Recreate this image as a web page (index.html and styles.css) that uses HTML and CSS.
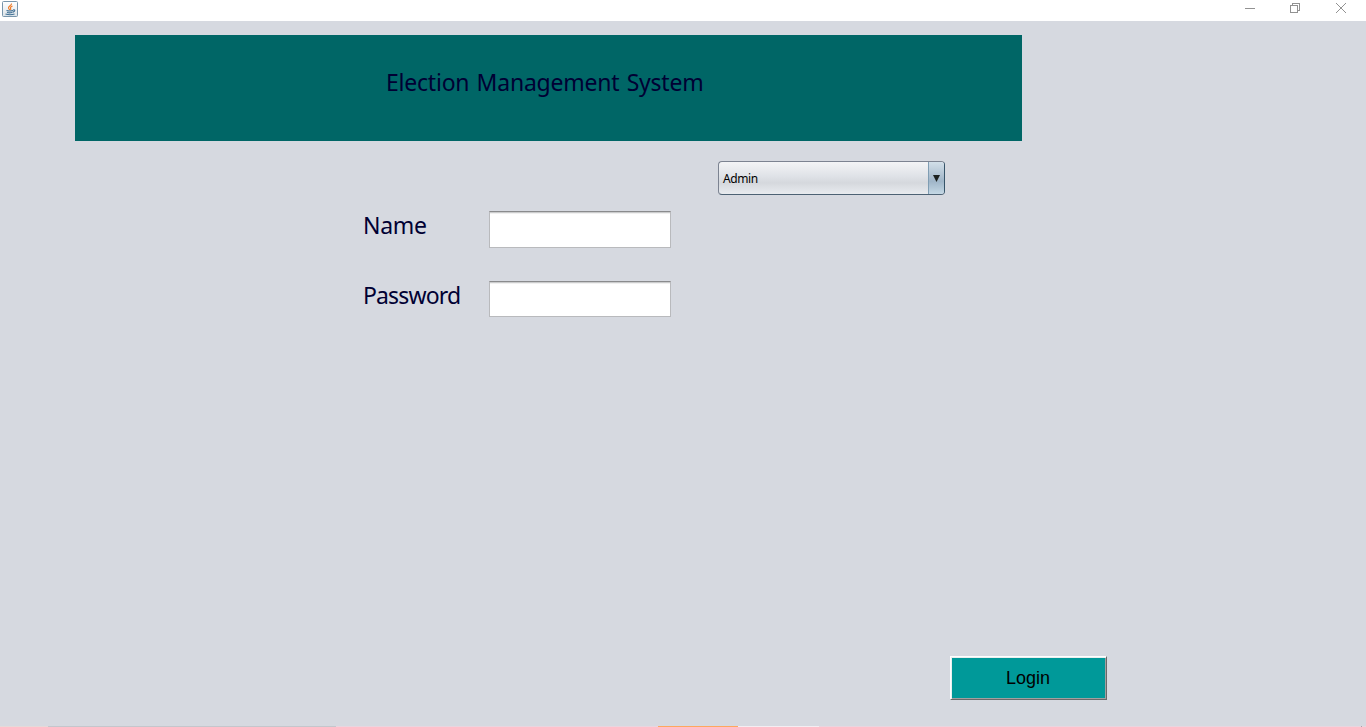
FILE: index.html
```html
<!DOCTYPE html>
<html lang="en">
<head>
<meta charset="utf-8">
<title>Election Management System</title>
<link rel="stylesheet" href="styles.css">
</head>
<body>
<div class="window">
  <header class="titlebar">
    <svg class="app-icon" width="16" height="16" viewBox="0 0 16 16">
      <defs><linearGradient id="g" x1="0" y1="0" x2="0" y2="1"><stop offset="0" stop-color="#fff"/><stop offset="1" stop-color="#dce3e8"/></linearGradient></defs>
      <rect x=".5" y=".5" width="15" height="15" rx="1" fill="url(#g)" stroke="#7895ab"/>
      <path d="M9.500 2.500C10 4.500 6 5 6.500 7Q6.700 8 8 9M10.500 5Q8 6 8.500 7.200T8.500 9" fill="none" stroke="#ee7d2b" stroke-width="1.200"/>
      <path d="M4.500 9.500Q7.500 10.500 11 9.500M11 9Q13.500 8.500 12.500 10.200L10.500 11.500M5 11.500Q7.500 12.300 10 11.500M3.500 13Q8 14.500 12.500 13" fill="none" stroke="#3f6f94" stroke-width="1.100"/>
    </svg>
    <nav class="controls">
      <svg width="12" height="12" viewBox="0 0 12 12" shape-rendering="crispEdges"><path d="M1 6.500H11"/></svg>
      <svg width="12" height="12" viewBox="0 0 12 12" shape-rendering="crispEdges"><path d="M1.500 3.500H8.500V10.500H1.500ZM3.500 3V1.500H10.500V8.500H9"/></svg>
      <svg width="12" height="12" viewBox="0 0 12 12"><path d="M1 1L11 11M11 1L1 11"/></svg>
    </nav>
  </header>
  <main class="content">
    <section class="banner"><h1>Election Management System</h1></section>
    <button class="combo" type="button"><span class="combo-value">Admin</span><span class="combo-arrow"><svg width="7" height="7" viewBox="0 0 7 7"><path d="M0 0H7L3.500 7Z"/></svg></span></button>
    <form class="form">
      <label for="name">Name</label><input id="name" class="field" type="text">
      <label class="password-label" for="password">Password</label><input id="password" class="field short" type="password">
    </form>
    <button class="login" type="button"><span>Login</span></button>
  </main>
  <footer class="taskbar"><i class="edge"></i><i class="search"></i><i class="pink"></i><i class="active"></i><i class="light"></i><i class="rest"></i><i class="tick"></i><i class="end"></i></footer>
</div>
</body>
</html>
```

FILE: styles.css
```css
* { box-sizing: border-box; }
body { margin: 0; font-family: "Noto Sans", sans-serif; }
.window { width: 1366px; height: 727px; display: flex; flex-direction: column; background: #d6d9e0; overflow: hidden; }
.titlebar { height: 21px; flex: none; display: flex; justify-content: space-between; background: #fff; padding: 1px 19px 0 2px; }
.app-icon { display: block; }
.controls { display: flex; gap: 34px; padding-top: 1px; }
.controls svg { display: block; fill: none; stroke: #929292; stroke-width: 1; }
.controls svg:first-child { margin-right: -1px; }
.content { flex: 1; display: flex; flex-direction: column; padding-top: 14px; }
.banner { width: 947px; height: 106px; margin-left: 75px; padding: 30px 0 0 311px; background: #006666; }
h1 { margin: 0; font-size: 23px; line-height: 34px; font-weight: 400; letter-spacing: -0.22px; word-spacing: 1.5px; color: #000033; white-space: nowrap; }
.combo { width: 227px; height: 34px; margin: 20px 0 0 718px; padding: 0; display: flex; overflow: hidden; border: 1px solid #7c8391; border-right-color: #365469; border-bottom-color: #4d6274; border-radius: 4px; background: linear-gradient(#f3f4f6, #dfe2e7 45%, #d5d8dd 65%, #e8ebef); font-family: "Noto Sans", sans-serif; font-size: 12px; color: #000; text-align: left; }
.combo-value { flex: 1; padding-left: 4px; line-height: 33px; letter-spacing: -0.4px; }
.combo-arrow { width: 16px; height: 32px; flex: none; border-left: 1px solid #7f9db3; background: linear-gradient(#d2dfe9, #aabdce 48%, #9fb5c8 60%, #c4d8e5); display: flex; justify-content: center; padding-top: 13px; }
.combo-arrow svg { display: block; fill: #1c211f; }
.form { display: grid; grid-template-columns: 126px 182px; grid-template-rows: 37px 36px; row-gap: 33px; margin: 16px 0 0 363px; }
label { font-size: 23px; line-height: 29px; letter-spacing: -0.3px; color: #000033; }
.password-label { letter-spacing: -0.85px; }
.field { width: 182px; height: 37px; padding: 0 6px; border: 1px solid #b9babd; border-top-color: #8a8b8d; border-radius: 0; background: #fff; box-shadow: inset 0 1px #cbcccd, inset 0 2px #f1f1f1; outline: none; }
.short { height: 36px; }
.login { width: 157px; height: 44px; margin: 339px 0 0 950px; padding: 0 1px 0 0; border: 1px solid; border-color: #fff #696969 #696969 #fff; box-shadow: inset 1px 1px #e9efef, inset -1px -1px #a0a0a0; background: #009999; color: #000; font: 18px/40px "Liberation Sans", sans-serif; }
.taskbar { height: 1px; flex: none; display: flex; }
.taskbar i { height: 1px; background: #ead5df; }
.taskbar .edge { width: 48px; background: #e6d9d9; }
.taskbar .search { width: 288px; background: #c5c6cc; }
.taskbar .pink { width: 322px; }
.taskbar .active { width: 80px; background: #ffa75e; }
.taskbar .light { width: 81px; background: #f5edf2; }
.taskbar .rest { width: 542px; }
.taskbar .tick { width: 1px; background: #a9a0a8; }
.taskbar .end { width: 4px; }
```
